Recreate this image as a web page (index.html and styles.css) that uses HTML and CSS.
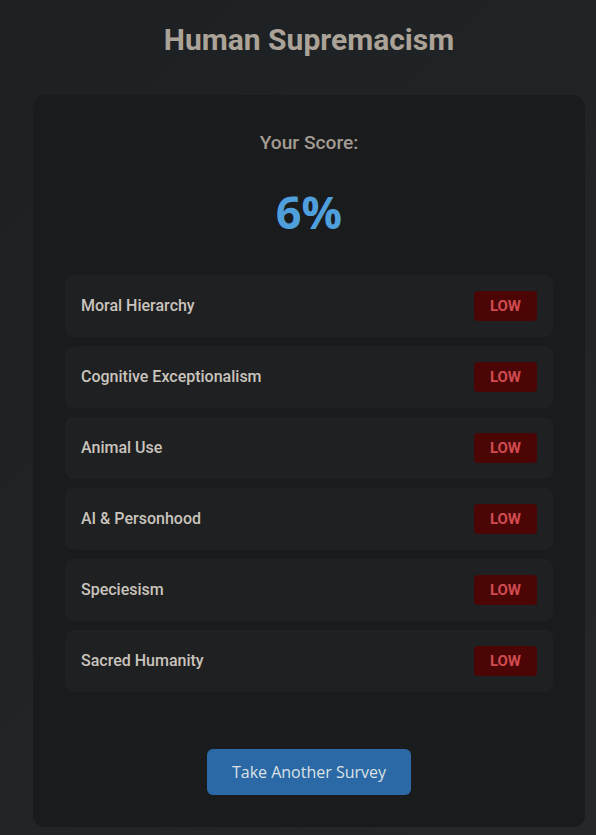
FILE: index.html
```html
<!DOCTYPE html>
<html lang="en">
<head>
    <meta charset="UTF-8">
    <meta name="viewport" content="width=device-width, initial-scale=1.0">
    <title>Results</title>
    <link rel="stylesheet" href="styles.css">
</head>
<body>
    <div class="page">
        <h1 class="survey-title">Human Supremacism</h1>

        <div class="result-card">
            <h3 class="score-label">Your Score:</h3>
            <div class="score-value">6%</div>

            <ul class="category-list">
                <li class="category-row"><span>Moral Hierarchy</span><span class="level-badge">LOW</span></li>
                <li class="category-row"><span>Cognitive Exceptionalism</span><span class="level-badge">LOW</span></li>
                <li class="category-row"><span>Animal Use</span><span class="level-badge">LOW</span></li>
                <li class="category-row"><span>AI &amp; Personhood</span><span class="level-badge">LOW</span></li>
                <li class="category-row"><span>Speciesism</span><span class="level-badge">LOW</span></li>
                <li class="category-row"><span>Sacred Humanity</span><span class="level-badge">LOW</span></li>
            </ul>

            <div class="actions">
                <button class="retake-button" type="button">Take Another Survey</button>
            </div>
        </div>
    </div>
</body>
</html>
```

FILE: styles.css
```css
body {
    margin: 0;
    min-height: 835px;
    background: linear-gradient(135deg, #1d2022 0%, #212427 50%, #24282b 100%);
    font-family: Roboto, "Liberation Sans", sans-serif;
    color: #c9c4bd;
}

.page {
    width: 552px;
    margin-left: 33px;
    padding-top: 22px;
}

.survey-title {
    margin: 0 0 37px;
    font-size: 30px;
    font-weight: 700;
    line-height: 36px;
    text-align: center;
    color: #aba298;
}

.result-card {
    padding: 34px 32px 32px;
    background-color: #1a1b1d;
    border-radius: 12px;
}

.score-label {
    margin: 0;
    font-size: 19.2px;
    font-weight: 500;
    line-height: 1.5;
    text-align: center;
    color: #a39c93;
}

.score-value {
    margin: 27px 0 36px;
    font-family: "Open Sans", "Noto Sans", sans-serif;
    font-size: 45px;
    font-weight: 700;
    line-height: 54px;
    text-align: center;
    color: #4f9fdc;
}

.category-list {
    display: flex;
    flex-direction: column;
    gap: 9px;
    margin: 0;
    padding: 0;
    list-style: none;
}

.category-row {
    display: flex;
    align-items: center;
    justify-content: space-between;
    padding: 16px;
    background-color: #1f2022;
    border-radius: 8px;
    font-size: 16px;
    font-weight: 500;
}

.level-badge {
    padding: 6px 16px;
    background-color: #4b0505;
    border-radius: 4px;
    font-size: 15px;
    font-weight: 700;
    line-height: 18px;
    color: #cf4b50;
}

.actions {
    display: flex;
    justify-content: center;
    margin-top: 57px;
}

.retake-button {
    padding: 12px 25px;
    background-color: #2a69a5;
    border: none;
    border-radius: 6px;
    font-family: "Open Sans", "Noto Sans", sans-serif;
    font-size: 16px;
    line-height: 22px;
    color: #dde1e5;
    cursor: pointer;
}
```
